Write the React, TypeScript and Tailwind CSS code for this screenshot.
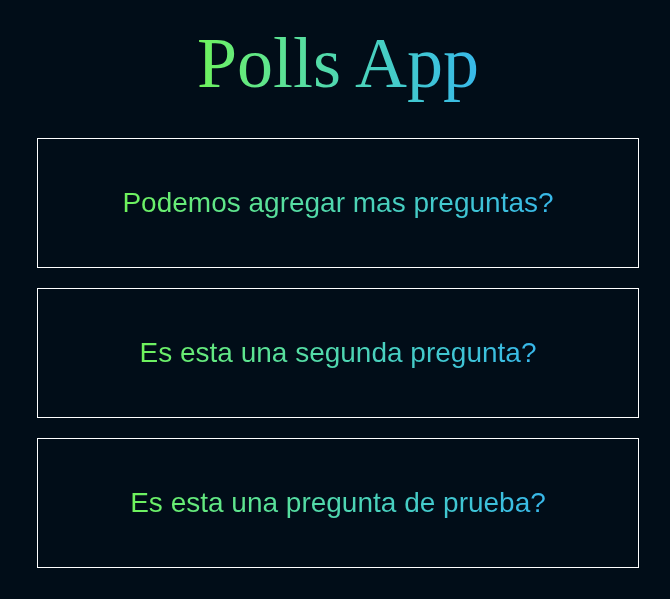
import React from "react";

const questions = [
  "Podemos agregar mas preguntas?",
  "Es esta una segunda pregunta?",
  "Es esta una pregunta de prueba?",
];

export default function App() {
  return (
    <div className="min-h-[599px] w-full bg-[#010d18] pb-8">
      <div className="ml-[37px] w-[602px]">
        <div className="flex justify-center pt-[13px]">
          <h1
            className="bg-gradient-to-r from-[#6ff25a] to-[#38b8ea] bg-clip-text text-[72px] leading-[100px] text-transparent"
            style={{ fontFamily: '"Liberation Serif", "Times New Roman", serif' }}
          >
            Polls App
          </h1>
        </div>
        <div className="mt-[25px] flex flex-col gap-[20px]">
          {questions.map((q) => (
            <div
              key={q}
              className="flex h-[130px] items-center justify-center border border-white"
            >
              <span
                className="bg-gradient-to-r from-[#6ff25a] to-[#38b8ea] bg-clip-text text-[28px] leading-[34px] text-transparent"
                style={{ fontFamily: '"Liberation Sans", Arial, sans-serif' }}
              >
                {q}
              </span>
            </div>
          ))}
        </div>
      </div>
    </div>
  );
}
